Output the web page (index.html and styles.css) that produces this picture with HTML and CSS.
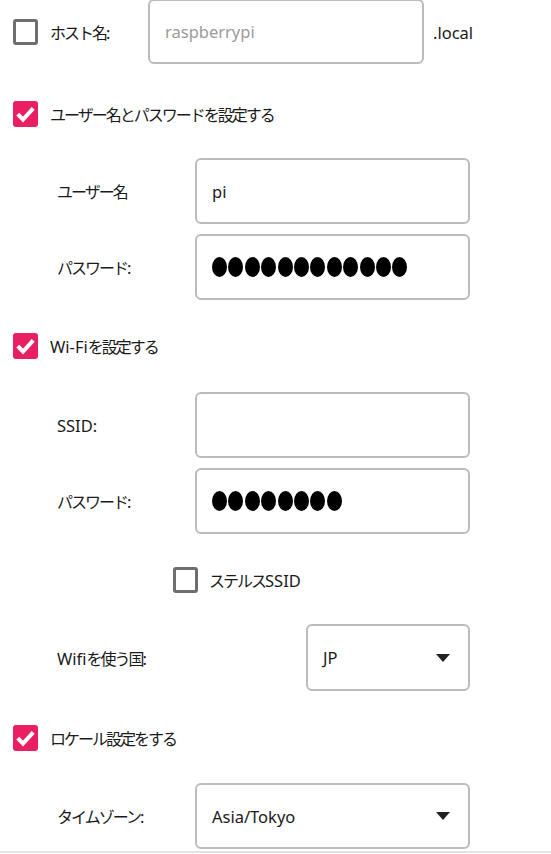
FILE: index.html
```html
<!DOCTYPE html>
<html lang="ja">
<head>
<meta charset="utf-8">
<title>OS customisation</title>
<link rel="stylesheet" href="styles.css">
</head>
<body>
<div class="page">
  <div class="host-row">
    <span class="cb"></span>
    <span class="host-label"><span class="k">ホスト名</span>:</span>
    <div class="field host-field"><span class="ph">raspberrypi</span></div>
    <span class="suffix">.local</span>
  </div>

  <div class="section s-user">
    <span class="cb on"><svg viewBox="0 0 25 26" width="25" height="26"><path d="M4.8 13.2 L10 18.6 L20.2 7.4" fill="none" stroke="#fff" stroke-width="4"/></svg></span>
    <span class="sec-label k">ユーザー名とパスワードを設定する</span>
  </div>

  <div class="fields f-user">
    <div class="frow">
      <span class="flabel k">ユーザー名</span>
      <div class="field"><span class="val">pi</span></div>
    </div>
    <div class="frow">
      <span class="flabel"><span class="k">パスワード</span>:</span>
      <div class="field"><span class="dots"><i></i><i></i><i></i><i></i><i></i><i></i><i></i><i></i><i></i><i></i><i></i><i></i></span></div>
    </div>
  </div>

  <div class="section s-wifi">
    <span class="cb on"><svg viewBox="0 0 25 26" width="25" height="26"><path d="M4.8 13.2 L10 18.6 L20.2 7.4" fill="none" stroke="#fff" stroke-width="4"/></svg></span>
    <span class="sec-label">Wi-Fi<span class="k">を設定する</span></span>
  </div>

  <div class="fields f-wifi">
    <div class="frow">
      <span class="flabel">SSID:</span>
      <div class="field"></div>
    </div>
    <div class="frow">
      <span class="flabel"><span class="k">パスワード</span>:</span>
      <div class="field"><span class="dots"><i></i><i></i><i></i><i></i><i></i><i></i><i></i><i></i></span></div>
    </div>
  </div>

  <div class="stealth">
    <span class="cb"></span>
    <span class="sec-label"><span class="k">ステルス</span>SSID</span>
  </div>

  <div class="frow country">
    <span class="flabel">Wifi<span class="k">を使う国</span>:</span>
    <div class="field select small"><span class="val">JP</span><span class="arrow"></span></div>
  </div>

  <div class="section s-locale">
    <span class="cb on"><svg viewBox="0 0 25 26" width="25" height="26"><path d="M4.8 13.2 L10 18.6 L20.2 7.4" fill="none" stroke="#fff" stroke-width="4"/></svg></span>
    <span class="sec-label k">ロケール設定をする</span>
  </div>

  <div class="frow tz">
    <span class="flabel"><span class="k">タイムゾーン</span>:</span>
    <div class="field select"><span class="val">Asia/Tokyo</span><span class="arrow"></span></div>
  </div>
</div>
</body>
</html>
```

FILE: styles.css
```css
html, body {
  margin: 0;
  padding: 0;
  background: #fff;
}
body {
  width: 551px;
  height: 854px;
  overflow: hidden;
  font-family: "Noto Sans", "Noto Sans CJK JP", sans-serif;
  font-size: 16.5px;
  color: #1a1a1a;
}
.page {
  box-sizing: border-box;
  height: 853px;
  border-bottom: 2px solid #e2e2e2;
  display: flex;
  flex-direction: column;
}
.k {
  font-family: "Noto Sans CJK JP", sans-serif;
  font-size: 16px;
  letter-spacing: -2px;
}

/* checkbox */
.cb {
  box-sizing: border-box;
  width: 25px;
  height: 26px;
  flex: none;
  border: 3px solid #6e6e6e;
  border-radius: 3px;
  display: block;
}
.cb.on {
  border: none;
  background: #e91e63;
}
.cb svg { display: block; }

/* fields */
.field {
  box-sizing: border-box;
  width: 275px;
  height: 66px;
  border: 2px solid #bcbcbc;
  border-radius: 6px;
  padding: 0 18px 0 15px;
  display: flex;
  align-items: center;
  background: #fff;
}
.ph { color: #9b9b9b; }
.val { color: #1a1a1a; }

/* host row */
.host-row {
  display: flex;
  align-items: center;
  margin-top: -1px;
  height: 65px;
  padding-left: 13px;
}
.host-label {
  width: 98px;
  margin-left: 12px;
}
.host-field {
  width: 276px;
  height: 65px;
}
.suffix {
  margin-left: 9px;
  margin-top: 2px;
}

/* section headers */
.section {
  display: flex;
  align-items: center;
  gap: 12px;
  padding-left: 13px;
  height: 26px;
}
.s-user { margin-top: 37px; }
.s-wifi { margin-top: 33px; }
.s-locale { margin-top: 34px; }

/* field groups */
.fields {
  display: flex;
  flex-direction: column;
  gap: 10px;
}
.f-user { margin-top: 31px; }
.f-wifi { margin-top: 33px; }
.frow {
  display: flex;
  align-items: center;
  padding-left: 57px;
}
.flabel {
  width: 138px;
  flex: none;
}

/* password dots */
.dots {
  display: flex;
  gap: 1.4px;
}
.dots i {
  display: block;
  width: 15px;
  height: 20px;
  border-radius: 50%;
  background: #000;
}

/* stealth */
.stealth {
  display: flex;
  align-items: center;
  gap: 11px;
  padding-left: 173px;
  height: 26px;
  margin-top: 33px;
}

/* selects */
.select {
  justify-content: space-between;
}
.arrow {
  width: 0;
  height: 0;
  border-left: 7px solid transparent;
  border-right: 7px solid transparent;
  border-top: 8px solid #222;
}
.country { margin-top: 31px; }
.country .flabel { width: 249px; }
.small { width: 164px; height: 67px; }
.tz { margin-top: 32px; }
```
